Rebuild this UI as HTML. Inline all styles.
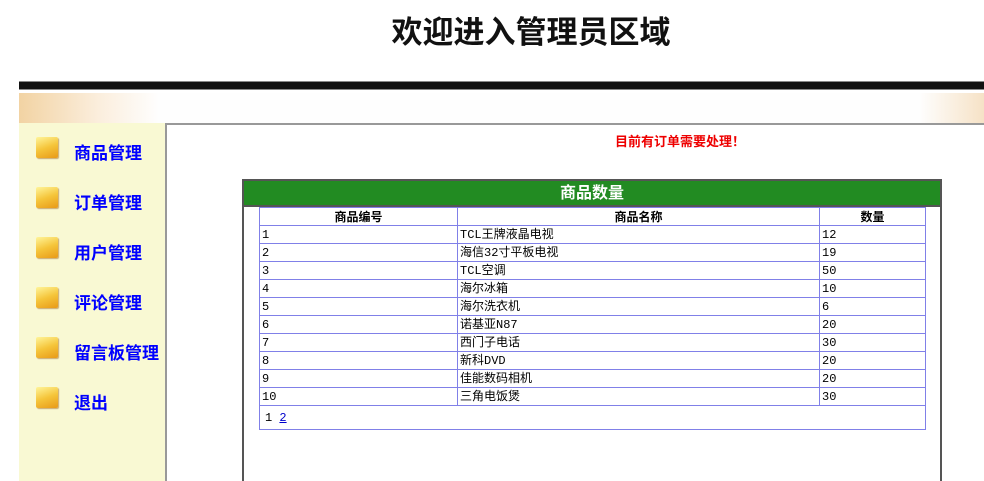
<!DOCTYPE html>
<html><head><meta charset="utf-8"><style>
*{margin:0;padding:0;box-sizing:border-box}
html,body{width:984px;height:481px;overflow:hidden}
body{background:#fff;position:relative;font-family:"Liberation Sans","Noto Sans CJK SC",sans-serif}
.title{position:absolute;left:385px;width:292px;top:12px;text-align:center;font-size:31px;font-weight:bold;color:#111;font-family:"Noto Sans CJK SC",sans-serif;white-space:nowrap;line-height:36px}
.bar{position:absolute;left:19px;right:0;top:81px;height:9px;background:#111;border-top:1px solid #888;border-bottom:1px solid #888}
.band{position:absolute;left:19px;right:0;top:93px;height:30px;background:linear-gradient(90deg,#f2d3a3 0,#fbeedd 80px,#fefefe 140px,#fefefe 900px,#f6e2c6 100%)}
.side{position:absolute;left:19px;top:123px;width:146px;height:358px;background:#f9f9d3}
.main{position:absolute;left:165px;top:123px;width:819px;height:358px;border-left:2px solid #999;border-top:2px solid #999}
.item{position:absolute;left:17px;height:24px}
.ico{position:absolute;left:0;top:0;width:22px;height:21px;background:linear-gradient(160deg,#fff59a,#f5c53a 50%,#e89a18);border-radius:2px;box-shadow:1px 1px 1px #c9a870}
.item span{position:absolute;left:38px;top:2px;white-space:nowrap;font-size:17px;font-weight:bold;color:#0000ff}
.red{position:absolute;left:615px;top:131px;font-size:13px;font-weight:bold;color:#e00;white-space:nowrap}
.box{position:absolute;left:242px;top:179px;width:700px;height:302px;border:2px solid #555;border-bottom:none}
.hd{height:26px;background:#228b22;color:#fff;font-weight:bold;font-size:16px;text-align:center;line-height:26px;border-bottom:2px solid #555}
table{position:absolute;left:15px;top:26px;width:667px;border-collapse:collapse;font-size:12px}
td,th{border:1px solid #8080e8;height:18px;padding:0 2px;text-align:left;font-family:"Liberation Mono","Noto Sans CJK SC",monospace;font-size:12px;color:#000;line-height:16px}
th{text-align:center;font-weight:bold;font-family:"Liberation Sans","Noto Sans CJK SC",sans-serif}
.pg td{height:24px;padding-left:5px}
a{color:#00c;text-decoration:underline}
</style></head><body>
<div class="title">欢迎进入管理员区域</div>
<div class="bar"></div>
<div class="band"></div>
<div class="side">
<div class="item" style="top:14px"><div class="ico"></div><span>商品管理</span></div>
<div class="item" style="top:64px"><div class="ico"></div><span>订单管理</span></div>
<div class="item" style="top:114px"><div class="ico"></div><span>用户管理</span></div>
<div class="item" style="top:164px"><div class="ico"></div><span>评论管理</span></div>
<div class="item" style="top:214px"><div class="ico"></div><span>留言板管理</span></div>
<div class="item" style="top:264px"><div class="ico"></div><span>退出</span></div>
</div>
<div class="main"></div>
<div class="red">目前有订单需要处理！</div>
<div class="box"><div class="hd">商品数量</div>
<table>
<tr><th style="width:198px">商品编号</th><th style="width:362px">商品名称</th><th>数量</th></tr>
<tr><td>1</td><td>TCL王牌液晶电视</td><td>12</td></tr>
<tr><td>2</td><td>海信32寸平板电视</td><td>19</td></tr>
<tr><td>3</td><td>TCL空调</td><td>50</td></tr>
<tr><td>4</td><td>海尔冰箱</td><td>10</td></tr>
<tr><td>5</td><td>海尔洗衣机</td><td>6</td></tr>
<tr><td>6</td><td>诺基亚N87</td><td>20</td></tr>
<tr><td>7</td><td>西门子电话</td><td>30</td></tr>
<tr><td>8</td><td>新科DVD</td><td>20</td></tr>
<tr><td>9</td><td>佳能数码相机</td><td>20</td></tr>
<tr><td>10</td><td>三角电饭煲</td><td>30</td></tr>
<tr class="pg"><td colspan="3">1 <a>2</a></td></tr>
</table></div>
</body></html>
